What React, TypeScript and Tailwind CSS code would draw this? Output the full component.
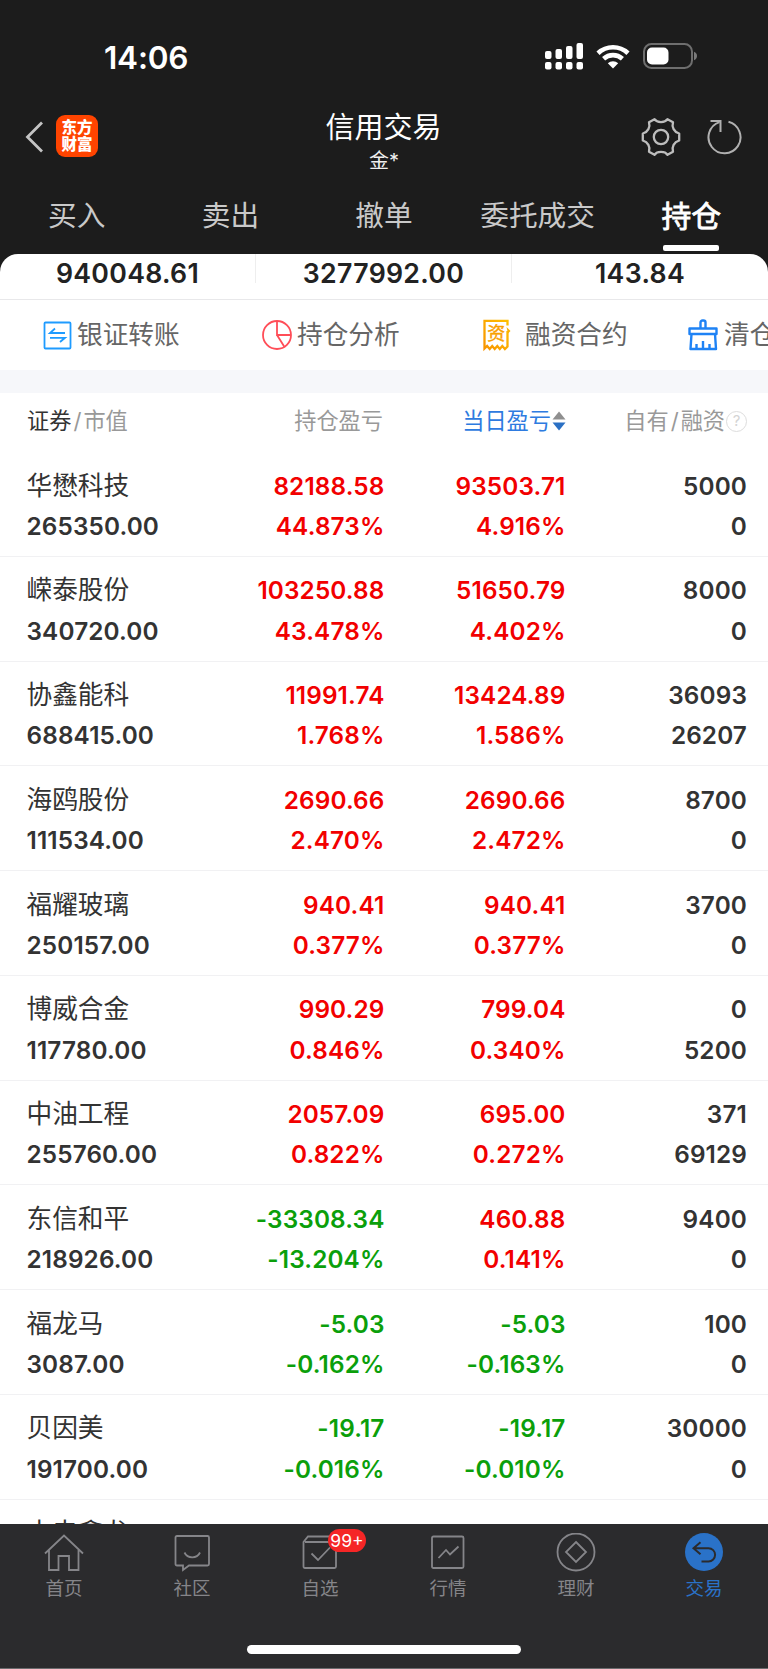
import React from "react";

const tabs = ["买入", "卖出", "撤单", "委托成交", "持仓"];

type Row = [string, string, string, string, string, string, string, string];
const rows: Row[] = [
  ["华懋科技", "265350.00", "82188.58", "44.873%", "93503.71", "4.916%", "5000", "0"],
  ["嵘泰股份", "340720.00", "103250.88", "43.478%", "51650.79", "4.402%", "8000", "0"],
  ["协鑫能科", "688415.00", "11991.74", "1.768%", "13424.89", "1.586%", "36093", "26207"],
  ["海鸥股份", "111534.00", "2690.66", "2.470%", "2690.66", "2.472%", "8700", "0"],
  ["福耀玻璃", "250157.00", "940.41", "0.377%", "940.41", "0.377%", "3700", "0"],
  ["博威合金", "117780.00", "990.29", "0.846%", "799.04", "0.340%", "0", "5200"],
  ["中油工程", "255760.00", "2057.09", "0.822%", "695.00", "0.272%", "371", "69129"],
  ["东信和平", "218926.00", "-33308.34", "-13.204%", "460.88", "0.141%", "9400", "0"],
  ["福龙马", "3087.00", "-5.03", "-0.162%", "-5.03", "-0.163%", "100", "0"],
  ["贝因美", "191700.00", "-19.17", "-0.016%", "-19.17", "-0.010%", "30000", "0"],
];

const tone = (v: string) => (v.startsWith("-") ? "text-[#0b9f0b]" : "text-[#f20000]");

function StatusBar() {
  return (
    <div className="flex h-[112px] items-center justify-between pt-[3px] pr-[69px] pl-[104px] text-white">
      <span className="text-[31.500px] leading-[40px] font-semibold tracking-[-0.2px]">14:06</span>
      <div className="flex items-center pb-[3px]">
        <svg width="39" height="28" viewBox="0 0 39 28" fill="currentColor">
          <rect x="0" y="9" width="6.500" height="8" rx="2" />
          <rect x="10.500" y="7" width="6.500" height="10" rx="2" />
          <rect x="21" y="4" width="6.500" height="13" rx="2" />
          <rect x="31.500" y="1" width="6.500" height="16" rx="2" />
          <rect x="0" y="20" width="6.500" height="7.500" rx="2" />
          <rect x="10.500" y="20" width="6.500" height="7.500" rx="2" />
          <rect x="21" y="20" width="6.500" height="7.500" rx="2" />
          <rect x="31.500" y="20" width="6.500" height="7.500" rx="2" />
        </svg>
        <svg className="ml-[12px]" width="34" height="26" viewBox="0 0 34 26" fill="none" stroke="currentColor" strokeWidth="4.600">
          <path d="M2 10.200a22 22 0 0 1 30 0" />
          <path d="M7.600 15.800a14 14 0 0 1 18.800 0" />
          <path d="M17 25.500l-5.200-5.200a7.600 7.600 0 0 1 10.400 0z" fill="currentColor" stroke="none" />
        </svg>
        <svg className="ml-[13px]" width="56" height="26" viewBox="0 0 56 26">
          <rect x="1" y="1" width="48" height="24" rx="7.500" fill="none" stroke="#6e6e6e" strokeWidth="2" />
          <rect x="4" y="4.500" width="21.500" height="17" rx="5" fill="#fff" />
          <path d="M51 8.800c4 1.200 4 7.200 0 8.400z" fill="#7a7a7a" />
        </svg>
      </div>
    </div>
  );
}

function TitleBar() {
  return (
    <div className="grid h-[74px] grid-cols-3">
      <div className="flex items-start pt-[3px] pl-[25px]">
        <svg className="mt-[6px]" width="19" height="32" viewBox="0 0 19 32" fill="none" stroke="#c4c4c4" strokeWidth="2.800">
          <path d="M17 1.500L2.500 16L17 30.500" />
        </svg>
        <div className="ml-[12px] flex h-[42px] w-[42px] flex-col items-center justify-center rounded-[9px] bg-[#ff4400] text-[15.500px] leading-[17px] font-black text-white">
          <span>东方</span>
          <span>财富</span>
        </div>
      </div>
      <div className="flex flex-col items-center">
        <span className="pr-px text-[29px] leading-[32px] text-white">信用交易</span>
        <span className="text-[20px] leading-[34px] text-[#f0f0f0]">金*</span>
      </div>
      <div className="flex items-start justify-end pt-[5px] pr-[25px]">
        <svg width="40" height="40" viewBox="0 0 40 40" fill="none" stroke="#bdbdbd" strokeWidth="2.300" strokeLinejoin="round">
          <circle cx="20" cy="20" r="7.200" />
          <path d="M13.500 2.200C16 6 24 6 26.500 2.200L32 5.300C30.500 10 33 15 38.200 16.500V23.500C33 25 30.500 30 32 34.700L26.500 37.800C24 34 16 34 13.500 37.800L8 34.700C9.500 30 7 25 1.800 23.500V16.500C7 15 9.500 10 8 5.300Z" />
        </svg>
        <svg className="ml-[26px]" width="36" height="40" viewBox="0 0 36 40" fill="none" stroke="#b0b0b0" strokeWidth="2">
          <path d="M21.500 4.800A16 16 0 1 1 12.500 5.100" />
          <path d="M3.500 4H13.500V15" />
        </svg>
      </div>
    </div>
  );
}

function Tabs() {
  return (
    <div className="grid h-[68px] grid-cols-5 pt-[10px]">
      {tabs.map((t, i) => (
        <div key={t} className="flex flex-col items-center">
          <span
            className={
              i === 4
                ? "text-[29.800px] leading-[40px] text-white [-webkit-text-stroke:0.8px_white]"
                : "text-[28.700px] leading-[40px] text-[#c9c9c9]"
            }
          >
            {t}
          </span>
          {i === 4 && <div className="mt-[9px] h-[6px] w-[56px] rounded-[2px] bg-white" />}
        </div>
      ))}
    </div>
  );
}

function Stats() {
  return (
    <div className="grid h-[46px] grid-cols-3 border-b border-[#e8e8ea] text-center text-[26.700px] leading-[38px] font-semibold tracking-[0.3px] text-[#222]">
      {["940048.61", "3277992.00", "143.84"].map((v, i) => (
        <div key={v} className={i < 2 ? "h-[29px] border-r border-[#eeeeee]" : "h-[29px]"}>{v}</div>
      ))}
    </div>
  );
}

function Tools() {
  return (
    <div className="flex h-[70px] items-center overflow-hidden text-[25.700px] leading-[40px] whitespace-nowrap text-[#666]">
      <svg className="ml-[43px] shrink-0" width="29" height="29" viewBox="0 0 29 29" fill="none" stroke="#1e9bff" strokeWidth="1.800">
        <rect x="1.500" y="1.500" width="26" height="26" rx="1" />
        <path d="M22 12H7L12 7.500M7 16.800H22L17 21" />
      </svg>
      <span className="ml-[5px] w-[103px] shrink-0">银证转账</span>
      <svg className="ml-[81px] shrink-0" width="32" height="32" viewBox="0 0 32 32" fill="none" stroke="#ff4d57" strokeWidth="1.800">
        <circle cx="16" cy="16" r="14" />
        <path d="M16 2V16H30M16 16L23.500 28" />
      </svg>
      <span className="ml-[4px] w-[103px] shrink-0">持仓分析</span>
      <svg className="ml-[81px] shrink-0" width="32" height="34" viewBox="0 0 32 34" fill="none">
        <defs>
          <linearGradient id="contract" x1="1" y1="0" x2="0" y2="1">
            <stop stopColor="#ffbf00" />
            <stop offset="1" stopColor="#f79400" />
          </linearGradient>
        </defs>
        <path d="M26.500 7.500V2.800H3.500V30.500L6.100 28L8.700 31L11.200 28L13.700 31L16.300 28L18.800 31L21.300 28L23.900 31L26.500 28.500V13" stroke="url(#contract)" strokeWidth="2.300" />
        <path d="M25.500 9L29.500 13L27 15.500Z" fill="#fab000" />
        <text x="15.200" y="22" fontSize="18" fill="#f9a000" stroke="#f9a000" strokeWidth="0.400" textAnchor="middle">资</text>
      </svg>
      <span className="ml-[12px] w-[103px] shrink-0">融资合约</span>
      <svg className="ml-[59px] shrink-0" width="32" height="32" viewBox="0 0 32 32" fill="none" stroke="#1e82f5" strokeWidth="2.400" strokeLinejoin="round">
        <path d="M13.500 9.500V3.500a2 2 0 0 1 2-2h1a2 2 0 0 1 2 2V9.500M2.500 9.500H29.500V15H2.500V9.500ZM4.500 15L3.500 30H29L28 15M9.500 30V25M16 30V22M22.500 30V25" />
      </svg>
      <span className="ml-[5px] shrink-0">清仓</span>
    </div>
  );
}

function TableHead() {
  return (
    <div className="grid h-[59px] grid-cols-[383px_183px_1fr] items-start pt-[8px] text-[22.200px] leading-[40px] text-[#999]">
      <div className="flex justify-between pl-[27px]">
        <div>
          <span className="text-[#333]">证券</span>
          <span className="px-[2px]">/</span>市值
        </div>
        <span>持仓盈亏</span>
      </div>
      <div className="flex items-center justify-end text-[#2e7be0]">
        <span>当日盈亏</span>
        <svg className="ml-[1px]" width="14" height="20" viewBox="0 0 14 20">
          <path d="M7 0.500L13.500 8.500H0.500Z" fill="#8f8f8f" />
          <path d="M7 19.500L13.500 11.500H0.500Z" fill="#2a70c4" />
        </svg>
      </div>
      <div className="flex items-center justify-end pr-[21px]">
        <span>自有</span>
        <span className="px-[2px]">/</span>
        <span>融资</span>
        <span className="ml-[1px] flex h-[21px] w-[21px] items-center justify-center rounded-full border border-[#ddd] text-[15px] leading-[18px] text-[#d4d4d4]">?</span>
      </div>
    </div>
  );
}

function Holding({ r }: { r: Row }) {
  return (
    <div className="grid h-[104.750px] shrink-0 grid-cols-[200px_184.500px_181px_181.500px] border-b border-[#f1f1f3] pt-[13.600px] text-[24.300px] leading-[40.200px] font-semibold tracking-[0.15px] text-[#333]">
      <div className="pl-[26.500px]">
        <div className="text-[25.700px] font-normal tracking-normal">{r[0]}</div>
        <div>{r[1]}</div>
      </div>
      <div className={`text-right ${tone(r[2])}`}>
        <div>{r[2]}</div>
        <div>{r[3]}</div>
      </div>
      <div className={`text-right ${tone(r[4])}`}>
        <div>{r[4]}</div>
        <div>{r[5]}</div>
      </div>
      <div className="text-right">
        <div>{r[6]}</div>
        <div>{r[7]}</div>
      </div>
    </div>
  );
}

const navIcons = [
  <path key="h" d="M1 20.500L20 2.500L39 20.500M5 17V37H14.500V23H25V37H34.500V17" />,
  <path key="c" d="M5 3H35.500Q37 3 37 4.500V31Q37 32.500 35.500 32.500H17L11 37V32.500H5Q3.500 32.500 3.500 31V4.500Q3.500 3 5 3ZM12.500 19.500C15.500 26 25 26 28 19.500" />,
  <path key="s" d="M5 9H34.500Q36 9 36 10.500V33.500Q36 35 34.500 35H5Q3.500 35 3.500 33.500V9L8 3.500H32L36 9M11.500 20.500L18 27L30 14.500" />,
  <path key="m" d="M5.500 3.500H34Q35.500 3.500 35.500 5V33.500Q35.500 35 34 35H5.500Q4 35 4 33.500V5Q4 3.500 5.500 3.500ZM10.500 25L18 17L22 21.500L30.500 13.500" />,
  <g key="f">
    <circle cx="20" cy="19" r="18.500" />
    <path d="M20 9L30 19L20 29L10 19Z" />
  </g>,
  <g key="t">
    <circle cx="20" cy="19" r="19" fill="#2a72c8" stroke="none" />
    <path d="M16.500 9.200L9.500 15.200L16.500 21.300M9.500 15.200H24.500A6.600 6.600 0 0 1 24.500 28.400H17.500" stroke="#2b2b2d" strokeWidth="2" />
  </g>,
];
const navLabels = ["首页", "社区", "自选", "行情", "理财", "交易"];

function BottomNav() {
  return (
    <nav className="flex h-[145px] shrink-0 flex-col border-b border-[#6b6b6d] bg-[#2b2b2d]">
      <div className="grid h-[121px] grid-cols-6 pt-[9px]">
        {navLabels.map((l, i) => (
          <div key={l} className={`flex flex-col items-center ${i === 5 ? "text-[#2a72c8]" : "text-[#858589]"}`}>
            <div className="relative h-[40px] w-[40px]">
              <svg width="40" height="40" viewBox="0 0 40 40" fill="none" stroke="currentColor" strokeWidth="1.800">
                {navIcons[i]}
              </svg>
              {i === 2 && (
                <span className="absolute -top-[4px] left-[28px] flex h-[23px] w-[38px] items-center justify-center rounded-full bg-[#f52626] text-[17.500px] leading-none text-white">99+</span>
              )}
            </div>
            <span className="mt-[1px] text-[18.500px] leading-[28px]">{l}</span>
          </div>
        ))}
      </div>
      <div className="mx-auto h-[9px] w-[274px] rounded-full bg-white" />
    </nav>
  );
}

export default function App() {
  return (
    <div className="flex h-[1669px] w-[768px] flex-col overflow-hidden bg-[#1c1c1c] font-['Inter','Noto_Sans_CJK_SC',sans-serif]">
      <StatusBar />
      <TitleBar />
      <Tabs />
      <main className="flex min-h-0 flex-1 flex-col overflow-hidden rounded-t-[18px] bg-white">
        <div className="shrink-0">
          <Stats />
          <Tools />
          <div className="h-[23px] bg-[#f6f7fa]" />
          <TableHead />
        </div>
        {rows.map((r) => (
          <Holding key={r[0]} r={r} />
        ))}
        <Holding r={["中电鑫龙", "", "-0000.00", "", "-000.00", "", "3000", ""]} />
      </main>
      <BottomNav />
    </div>
  );
}
